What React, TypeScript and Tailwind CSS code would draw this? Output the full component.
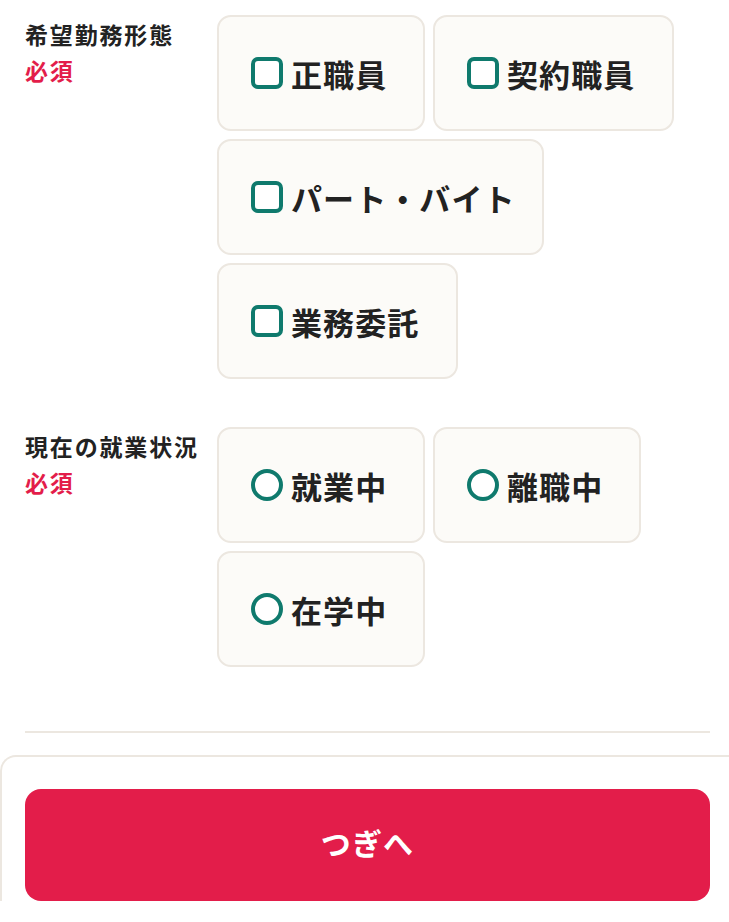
import React from "react";

const font = { fontFamily: '"Noto Sans CJK JP", "Noto Sans", sans-serif' };

function Check({ kind }: { kind: "box" | "radio" }) {
  return (
    <span
      className={
        "inline-block w-[32px] h-[32px] shrink-0 border-[4px] border-[#0f7a6d] bg-white " +
        (kind === "box" ? "rounded-[7px]" : "rounded-full")
      }
    />
  );
}

function Option({ label, kind, w }: { label: string; kind: "box" | "radio"; w: string }) {
  return (
    <div
      className={
        "h-[116px] flex items-center pl-[32px] gap-[8px] rounded-[14px] border-2 border-[#ece7e0] bg-[#fcfbf8] " + w
      }
    >
      <Check kind={kind} />
      <span className="text-[31px] font-bold tracking-[0.035em] text-[#222222] leading-none">{label}</span>
    </div>
  );
}

function Section({
  title,
  children,
}: {
  title: string;
  children: React.ReactNode;
}) {
  return (
    <div className="flex">
      <div className="w-[192px] shrink-0 pt-[1px]">
        <div className="text-[23px] font-bold tracking-[0.08em] text-[#222222] leading-[36px]">{title}</div>
        <div className="text-[23px] font-bold tracking-[0.08em] text-[#e31d4a] leading-[36px]">必須</div>
      </div>
      <div className="flex flex-col gap-[8px]">{children}</div>
    </div>
  );
}

export default function App() {
  return (
    <div className="w-[729px] h-[922px] bg-white overflow-hidden relative" style={font}>
      <div className="pl-[25px] pr-[19px] pt-[15px]">
        <Section title="希望勤務形態">
          <div className="flex gap-[8px]">
            <Option label="正職員" kind="box" w="w-[208px]" />
            <Option label="契約職員" kind="box" w="w-[241px]" />
          </div>
          <div className="flex">
            <Option label="パート・バイト" kind="box" w="w-[327px]" />
          </div>
          <div className="flex">
            <Option label="業務委託" kind="box" w="w-[241px]" />
          </div>
        </Section>
        <div className="h-[48px]" />
        <Section title="現在の就業状況">
          <div className="flex gap-[8px]">
            <Option label="就業中" kind="radio" w="w-[208px]" />
            <Option label="離職中" kind="radio" w="w-[208px]" />
          </div>
          <div className="flex">
            <Option label="在学中" kind="radio" w="w-[208px]" />
          </div>
        </Section>
        <div className="h-[64px]" />
        <div className="h-[2px] bg-[#ece7e0]" />
      </div>
      <div className="mt-[22px] border-t-2 border-l-2 border-[#ece7e0] rounded-tl-[16px] w-[760px] pt-[32px] pl-[23px]">
        <button className="w-[685px] h-[112px] rounded-[16px] bg-[#e31d4a] text-white text-[30px] font-bold tracking-[0.04em] flex items-center justify-center pb-[6px]">
          つぎへ
        </button>
      </div>
    </div>
  );
}
